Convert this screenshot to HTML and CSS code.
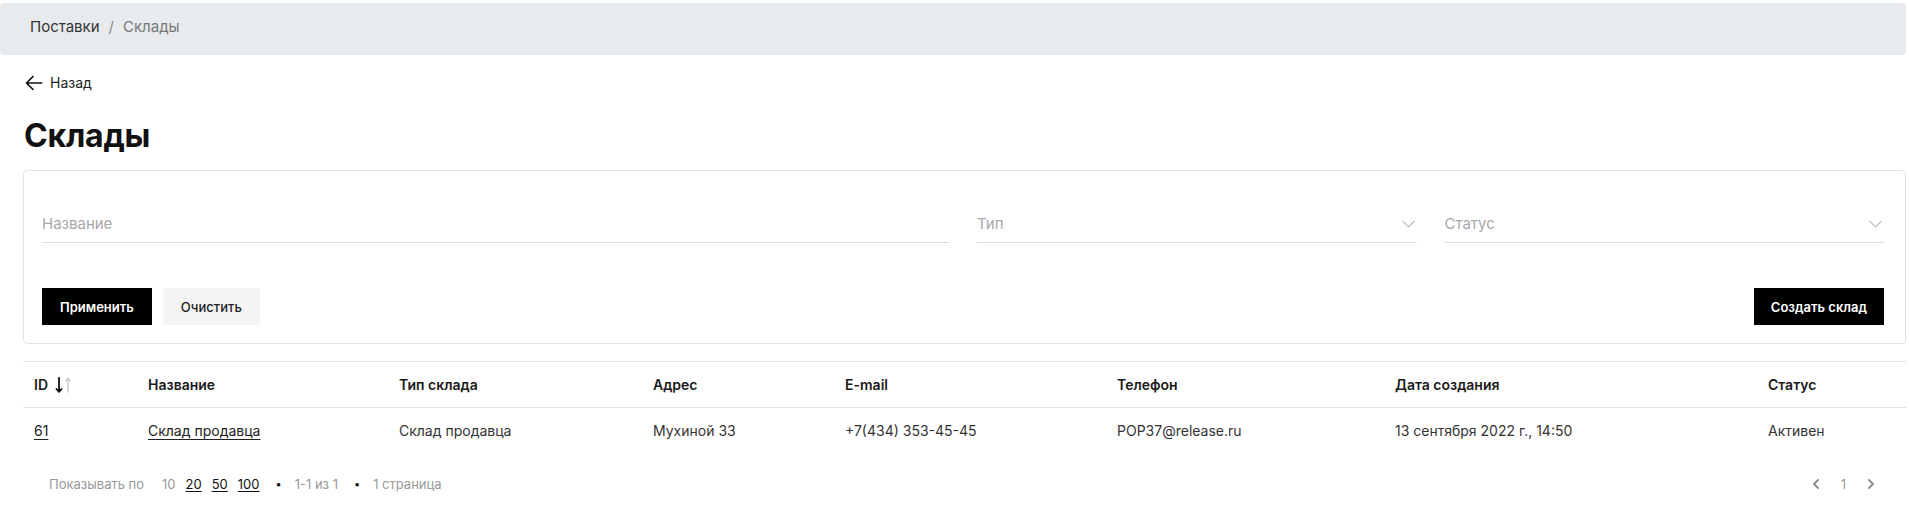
FILE: index.html
```html
<!DOCTYPE html>
<html lang="ru">
<head>
<meta charset="utf-8">
<title>Склады</title>
<link rel="stylesheet" href="styles.css">
</head>
<body>
<nav class="crumbs">
  <span class="crumb-link">Поставки</span>
  <span class="crumb-sep">/</span>
  <span class="crumb-current">Склады</span>
</nav>
<main class="content">
  <a class="back" href="#">
    <svg class="back-icon" width="18" height="16" viewBox="0 0 18 16" fill="none" stroke="#111" stroke-width="1.7" stroke-linecap="round" stroke-linejoin="round"><path d="M16.5 8H2M8 1.5L1.5 8L8 14.5"/></svg>
    <span>Назад</span>
  </a>
  <h1 class="title">Склады</h1>

  <section class="filters">
    <div class="fields">
      <div class="field field-name">Название</div>
      <div class="field field-select">Тип
        <svg class="chev" width="13" height="8" viewBox="0 0 13 8" fill="none" stroke="#bbb" stroke-width="1.2"><path d="M0.5 0.8L6.5 6.8L12.5 0.8"/></svg>
      </div>
      <div class="field field-select">Статус
        <svg class="chev" width="13" height="8" viewBox="0 0 13 8" fill="none" stroke="#bbb" stroke-width="1.2"><path d="M0.5 0.8L6.5 6.8L12.5 0.8"/></svg>
      </div>
    </div>
    <div class="actions">
      <button class="btn btn-dark">Применить</button>
      <button class="btn btn-light">Очистить</button>
      <button class="btn btn-dark btn-right">Создать склад</button>
    </div>
  </section>

  <table class="grid">
    <colgroup>
      <col class="c-id"><col class="c-name"><col class="c-type"><col class="c-addr"><col class="c-mail"><col class="c-phone"><col class="c-date"><col class="c-status">
    </colgroup>
    <thead>
      <tr>
        <th><span class="th-id">ID
          <svg class="sort" width="20" height="16" viewBox="0 0 20 16" fill="none" stroke-linecap="round" stroke-linejoin="round">
            <path d="M4 1V14.5M1.5 12L4 14.8L6.5 12" stroke="#111" stroke-width="1.8"/>
            <path d="M13 15V1.5M10.8 4L13 1.3L15.2 4" stroke="#c8c8c8" stroke-width="1.3"/>
          </svg></span></th>
        <th>Название</th>
        <th>Тип склада</th>
        <th>Адрес</th>
        <th>E-mail</th>
        <th>Телефон</th>
        <th>Дата создания</th>
        <th>Статус</th>
      </tr>
    </thead>
    <tbody>
      <tr>
        <td><a class="link" href="#">61</a></td>
        <td><a class="link" href="#">Склад продавца</a></td>
        <td>Склад продавца</td>
        <td>Мухиной 33</td>
        <td>+7(434) 353-45-45</td>
        <td>POP37@release.ru</td>
        <td>13 сентября 2022 г., 14:50</td>
        <td>Активен</td>
      </tr>
    </tbody>
  </table>

  <footer class="pager">
    <div class="pager-left">
      <span class="muted">Показывать по</span>
      <span class="sizes">
        <span class="muted">10</span>
        <a class="size" href="#">20</a>
        <a class="size" href="#">50</a>
        <a class="size" href="#">100</a>
      </span>
      <span class="dot">•</span>
      <span class="muted">1-1 из 1</span>
      <span class="dot">•</span>
      <span class="muted">1 страница</span>
    </div>
    <div class="pager-right">
      <svg width="8" height="12" viewBox="0 0 8 12" fill="none" stroke="#8a8a8a" stroke-width="1.8" stroke-linecap="round" stroke-linejoin="round"><path d="M6 2L2 6L6 10"/></svg>
      <span class="muted page">1</span>
      <svg width="8" height="12" viewBox="0 0 8 12" fill="none" stroke="#8a8a8a" stroke-width="1.8" stroke-linecap="round" stroke-linejoin="round"><path d="M2 2L6 6L2 10"/></svg>
    </div>
  </footer>
</main>
</body>
</html>
```
FILE: styles.css
```css
* { box-sizing: border-box; }

body {
  margin: 0;
  font-family: Inter, "Noto Sans", "Liberation Sans", sans-serif;
  color: #222;
  background: #fff;
}

.crumbs {
  margin: 3px 3px 0 0;
  height: 52px;
  background: #e8ebee;
  border-radius: 4px;
  display: flex;
  align-items: flex-start;
  padding: 14px 0 0 30px;
  font-size: 15px;
  line-height: 20px;
}
.crumb-link { color: #333; }
.crumb-sep { color: #888; margin: 0 9px; }
.crumb-current { color: #777; }

.content {
  padding: 0 3px 0 23px;
}

.back {
  margin: 18px 0 0 2px;
  display: inline-flex;
  align-items: center;
  gap: 7px;
  font-size: 14px;
  line-height: 20px;
  color: #222;
  text-decoration: none;
}
.back-icon { display: block; }

.title {
  margin: 21px 0 0 1px;
  font-size: 32px;
  line-height: 40px;
  font-weight: 700;
  color: #111;
  letter-spacing: -0.2px;
}

.filters {
  margin-top: 14px;
  border: 1px solid #e2e2e2;
  border-radius: 4px;
  padding: 33px 21px 18px 18px;
}

.fields {
  display: grid;
  grid-template-columns: repeat(4, 1fr);
  column-gap: 28px;
}
.field {
  height: 39px;
  border-bottom: 1px solid #dcdcdc;
  display: flex;
  align-items: center;
  justify-content: space-between;
  font-size: 15px;
  color: #a8a8a8;
  padding-top: 1px;
}
.field-name { grid-column: span 2; }
.chev { margin-right: 2px; }

.actions {
  margin-top: 45px;
  display: flex;
  gap: 11px;
}
.btn {
  height: 37px;
  padding: 0 18px;
  border: 0;
  border-radius: 0;
  font-family: inherit;
  font-size: 13px;
  cursor: pointer;
}
.btn-dark {
  background: #000;
  color: #fff;
  font-weight: 600;
}
.btn-light {
  background: #f4f4f4;
  color: #222;
  font-weight: 500;
}
.btn-right {
  margin-left: auto;
  padding: 0 17px;
}

.grid {
  margin-top: 17px;
  width: 100%;
  border-collapse: collapse;
  table-layout: fixed;
  font-size: 14px;
}
.c-id { width: 114px; }
.c-name { width: 251px; }
.c-type { width: 254px; }
.c-addr { width: 192px; }
.c-mail { width: 272px; }
.c-phone { width: 278px; }
.c-date { width: 373px; }
.c-status { width: auto; }

.grid thead tr {
  border-top: 1px solid #e2e2ea;
  border-bottom: 1px solid #e2e2ea;
}
.grid th {
  height: 46px;
  padding: 0 0 0 11px;
  text-align: left;
  font-weight: 600;
  color: #1a1a1a;
}
.grid td {
  height: 46px;
  padding: 0 0 0 11px;
  color: #333;
}
.th-id {
  display: inline-flex;
  align-items: center;
  gap: 7px;
}
.sort { display: block; }
.link {
  color: #222;
  text-decoration: underline;
  text-underline-offset: 3px;
}

.pager {
  margin-top: 20px;
  display: flex;
  align-items: center;
  justify-content: space-between;
  padding: 0 31px 0 26px;
  font-size: 13px;
  line-height: 20px;
}
.pager-left {
  display: flex;
  align-items: center;
}
.muted { color: #999; }
.sizes {
  display: flex;
  gap: 10px;
  margin-left: 18px;
}
.size {
  color: #111;
  text-decoration: underline;
  text-underline-offset: 2px;
}
.dot {
  color: #111;
  font-size: 11px;
  margin: 0 13px 0 16px;
}
.pager-right {
  display: flex;
  align-items: center;
  gap: 21px;
}
.page { font-size: 13px; }
```
